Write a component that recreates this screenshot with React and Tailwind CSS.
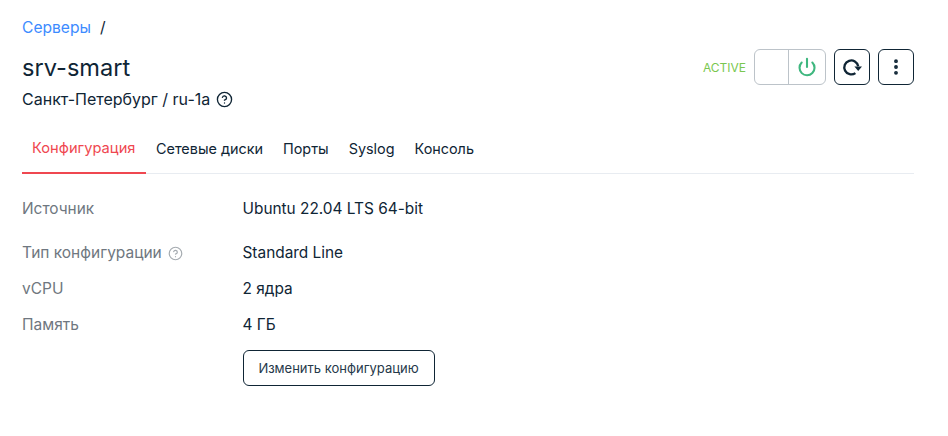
import { Power, EllipsisVertical, CircleHelp } from "lucide-react";

const ROWS = [
  { label: "Тип конфигурации", value: "Standard Line", help: true },
  { label: "vCPU", value: "2 ядра" },
  { label: "Память", value: "4 ГБ" },
];

const TABS = ["Сетевые диски", "Порты", "Syslog", "Консоль"];

function RefreshIcon() {
  return (
    <svg width="20" height="20" viewBox="0 0 20 20" fill="none">
      <path d="M16.2 9.2A7 7 0 1 0 13.4 16.1" stroke="#0f2535" strokeWidth="2.3" />
      <path d="M12.4 9.4h7.6l-3.8 4.6z" fill="#0f2535" />
    </svg>
  );
}

export default function App() {
  return (
    <div className="w-[948px] h-[436px] bg-white pl-[22px] pr-[34px] pt-[18px] font-['Inter',sans-serif] text-[#0f2535] overflow-hidden">
      <div className="flex items-center h-[20px] text-[15.6px] leading-[20px]">
        <span className="text-[#3d8bff]">Серверы</span>
        <span className="ml-[9px]">/</span>
      </div>

      <div className="flex items-start justify-between mt-[10px]">
        <div>
          <h1 className="text-[23.6px] leading-[32px] font-normal mt-[4px]">srv-smart</h1>
          <div className="flex items-center mt-[3px] text-[16px] leading-[24px]">
            Санкт-Петербург / ru-1a
            <CircleHelp size={17} strokeWidth={1.9} className="ml-[6px]" />
          </div>
        </div>
        <div className="flex items-center mt-[1px]">
          <span className="text-[12px] text-[#7ac74f] mr-[8px] pt-[2px]">ACTIVE</span>
          <div className="flex w-[72px] h-[36px] border border-[#bcc3c9] rounded-[6px]">
            <div className="w-[34px] border-r border-[#bcc3c9]" />
            <div className="flex-1 flex items-center justify-center">
              <Power size={20} strokeWidth={2.5} className="text-[#3fb77f]" />
            </div>
          </div>
          <button className="ml-[8px] w-[36px] h-[36px] border border-[#0f2535] rounded-[6px] flex items-center justify-center">
            <RefreshIcon />
          </button>
          <button className="ml-[8px] w-[36px] h-[36px] border border-[#0f2535] rounded-[6px] flex items-center justify-center">
            <EllipsisVertical size={20} strokeWidth={2.6} />
          </button>
        </div>
      </div>

      <div className="flex mt-[14px] h-[49px] border-b border-[#e8ecf1] text-[14.4px]">
        <div className="w-[124px] pl-[10px] pb-[1px] flex items-center text-[14.7px] text-[#ef4750] border-b-2 border-[#ef4750] h-[49px]">Конфигурация</div>
        {TABS.map((t) => (
          <div key={t} className="px-[10px] pb-[1px] flex items-center h-[48px]">{t}</div>
        ))}
      </div>

      <div className="flex items-center h-[36px] mt-[17px] text-[15.4px]">
        <div className="w-[220.5px] text-[#6f7780]">Источник</div>
        <div>Ubuntu 22.04 LTS 64-bit</div>
      </div>

      <div className="mt-[8px] text-[15.4px]">
        {ROWS.map((r) => (
          <div key={r.label} className="flex items-center h-[36px]">
            <div className="w-[220.5px] flex items-center text-[#6f7780]">
              <span className="text-[15.5px]">{r.label}</span>
              {r.help && <CircleHelp size={15} strokeWidth={1.9} className="ml-[6px] text-[#a5abb0]" />}
            </div>
            <div>{r.value}</div>
          </div>
        ))}
      </div>

      <button className="ml-[220.5px] mt-[7px] pt-[2px] w-[192px] h-[36px] border border-[#0f2535] rounded-[6px] text-[13px] text-[#26394a] flex items-center justify-center">
        Изменить конфигурацию
      </button>
    </div>
  );
}
